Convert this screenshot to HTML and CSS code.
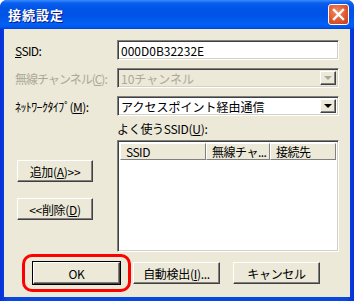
FILE: index.html
```html
<!DOCTYPE html>
<html lang="ja">
<head>
    <meta charset="UTF-8">
    <title>接続設定</title>
    <link rel="stylesheet" href="styles.css">
</head>
<body>
    <div class="window">
        <!-- Title bar -->
        <div class="titlebar">
            <span class="title">接続設定</span>
            <span class="close-btn">
                <svg width="13" height="13" viewBox="0 0 13 13">
                    <path d="M2 2 L11 11 M11 2 L2 11" stroke="#fff" stroke-width="2.4" stroke-linecap="square"/>
                </svg>
            </span>
        </div>

        <div class="client">
            <!-- Settings form -->
            <div class="form">
                <label class="label"><u>S</u>SID:</label>
                <div class="field">000D0B32232E</div>

                <label class="label disabled">無線チャンネル(<u>C</u>):</label>
                <div class="field combo disabled">
                    <span class="combo-text">10チャンネル</span>
                    <span class="drop-btn"><span class="arrow"></span></span>
                </div>

                <label class="label">ﾈｯﾄﾜｰｸﾀｲﾌﾟ(<u>M</u>):</label>
                <div class="field combo">
                    <span class="combo-text">アクセスポイント経由通信</span>
                    <span class="drop-btn"><span class="arrow"></span></span>
                </div>
            </div>

            <!-- Favourite SSID list -->
            <div class="middle">
                <div class="side-buttons">
                    <button class="btn side">追加(<u>A</u>)&gt;&gt;</button>
                    <button class="btn side">&lt;&lt;削除(<u>D</u>)</button>
                </div>
                <div class="list-area">
                    <div class="list-label">よく使うSSID(<u>U</u>):</div>
                    <div class="listview">
                        <div class="list-header">
                            <span class="col col-ssid">SSID</span>
                            <span class="col col-ch">無線チャ...</span>
                            <span class="col col-dest">接続先</span>
                        </div>
                    </div>
                </div>
            </div>

            <!-- Dialog buttons -->
            <div class="footer">
                <button class="btn default">OK</button>
                <button class="btn">自動検出(<u>I</u>)...</button>
                <button class="btn">キャンセル</button>
            </div>

            <div class="highlight"></div>
        </div>
    </div>
</body>
</html>
```

FILE: styles.css
```css
body {
    margin: 0;
    font-family: "MS UI Gothic", "Noto Sans CJK JP", sans-serif;
    font-size: 12px;
    color: #000;
    background: #fff;
    white-space: nowrap;
}
.window {
    width: 354px;
    height: 301px;
    display: flex;
    flex-direction: column;
    background: linear-gradient(to right, #0831D9, #0A46E0 2%, #0A46E0 98%, #0831D9);
    border-radius: 7px 7px 0 0;
    overflow: hidden;
    box-sizing: border-box;
}
.titlebar {
    height: 29px;
    flex: none;
    display: flex;
    align-items: center;
    justify-content: space-between;
    padding: 0 5px 0 8px;
    background: linear-gradient(to bottom, #3B8CFF 0, #0A5FEE 3px, #0055E8 8px, #0053E6 16px, #0060F5 24px, #0059EC 27px, #0040D6 29px);
}
.title {
    color: #fff;
    font-weight: bold;
    font-size: 13px;
    letter-spacing: 1px;
    text-shadow: 1px 1px #0A1883;
}
.close-btn {
    width: 19px;
    height: 19px;
    border: 1px solid #fff;
    border-radius: 3px;
    background: radial-gradient(circle at 40% 35%, #F08B66, #E0582E 55%, #C23B14);
    display: flex;
    align-items: center;
    justify-content: center;
}
.client {
    flex: 1;
    margin: 0 4px 4px 4px;
    padding: 11px 11px 0 11px;
    background: #ECE9D8;
    position: relative;
}
.form {
    display: grid;
    grid-template-columns: 102px 222px;
    grid-auto-rows: 20px;
    row-gap: 8px;
    align-items: center;
}
.label {
    letter-spacing: -0.6px;
}
.label.disabled {
    color: #ACA899;
    letter-spacing: -1px;
}
.field {
    height: 20px;
    box-sizing: border-box;
    background: #fff;
    border: 1px solid;
    border-color: #808080 #fff #fff #808080;
    box-shadow: inset 1px 1px #404040, inset -1px -1px #D4D0C8;
    padding: 3px 3px 0 3px;
    line-height: 14px;
}
.combo {
    display: flex;
    justify-content: space-between;
    padding: 2px 2px 2px 3px;
}
.combo.disabled {
    background: #ECE9D8;
    color: #ACA899;
}
.combo-text {
    padding-top: 1px;
}
.drop-btn {
    width: 16px;
    height: 14px;
    box-sizing: border-box;
    background: #ECE9D8;
    border: 1px solid;
    border-color: #fff #404040 #404040 #fff;
    box-shadow: inset -1px -1px #808080;
    display: flex;
    align-items: center;
    justify-content: center;
}
.arrow {
    width: 0;
    height: 0;
    border-left: 4px solid transparent;
    border-right: 4px solid transparent;
    border-top: 4px solid #000;
}
.disabled .arrow {
    border-top-color: #ACA899;
}
.middle {
    display: grid;
    grid-template-columns: 102px 222px;
}
.side-buttons {
    display: flex;
    flex-direction: column;
    gap: 16px;
    padding: 44px 0 0 2px;
}
.btn {
    font-family: inherit;
    font-size: 12px;
    width: 87px;
    height: 22px;
    padding: 0;
    background: #ECE9D8;
    color: #000;
    border: 1px solid;
    border-color: #fff #404040 #404040 #fff;
    box-shadow: inset -1px -1px #808080;
    white-space: nowrap;
    letter-spacing: -0.3px;
}
.btn.side {
    width: 76px;
}
.btn.default {
    outline: 1px solid #000;
}
.list-label {
    margin-top: 6px;
    height: 14px;
    line-height: 14px;
    margin-bottom: 4px;
    letter-spacing: -0.3px;
}
.listview {
    height: 112px;
    box-sizing: border-box;
    background: #fff;
    border: 1px solid;
    border-color: #808080 #fff #fff #808080;
    box-shadow: inset 1px 1px #404040, inset -1px -1px #D4D0C8;
    padding: 2px;
}
.list-header {
    display: flex;
    height: 17px;
}
.col {
    box-sizing: border-box;
    background: #ECE9D8;
    border: 1px solid;
    border-color: #fff #808080 #808080 #fff;
    padding: 1px 0 0 5px;
    line-height: 13px;
    overflow: hidden;
    letter-spacing: -0.5px;
}
.col-ssid { width: 86px; }
.col-ch { width: 64px; }
.col-dest { width: 66px; }
.footer {
    display: flex;
    gap: 13px;
    margin: 10px 0 0 18px;
}
.highlight {
    position: absolute;
    left: 18px;
    top: 225px;
    width: 103px;
    height: 32px;
    border: 3px solid #FF0000;
    border-radius: 10px;
}
```
